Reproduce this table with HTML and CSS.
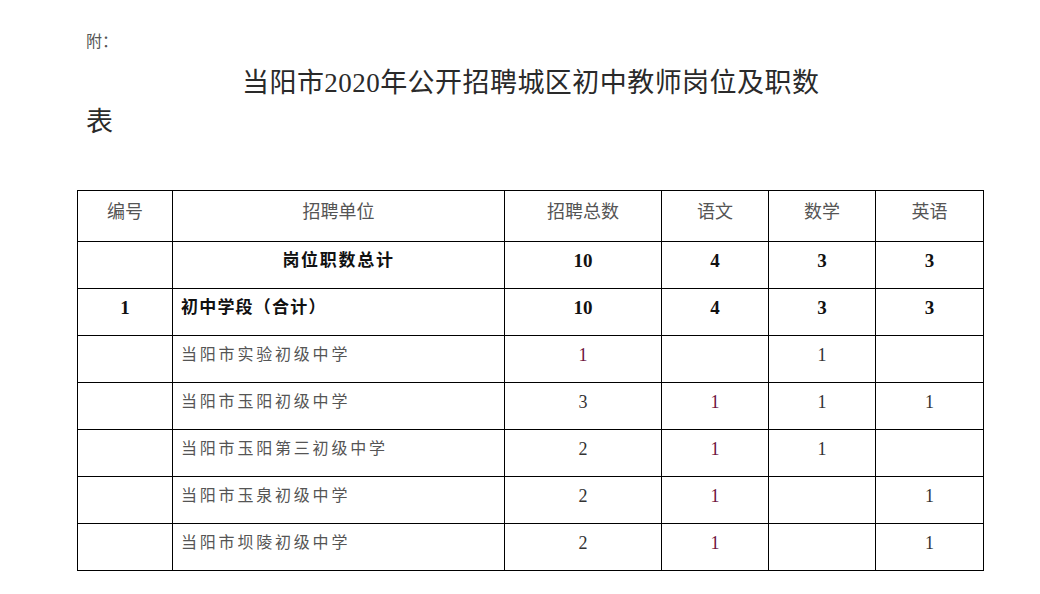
FILE: index.html
```html
<!DOCTYPE html>
<html lang="zh-CN">
<head>
<meta charset="utf-8">
<title>当阳市2020年公开招聘城区初中教师岗位及职数表</title>
<link rel="stylesheet" href="styles.css">
</head>
<body>
<div class="page">
  <p class="note">附：</p>
  <h1 class="title">当阳市2020年公开招聘城区初中教师岗位及职数表</h1>
  <table class="jobs">
    <colgroup>
      <col class="c-no"><col class="c-unit"><col class="c-total"><col class="c-sub"><col class="c-sub"><col class="c-sub2">
    </colgroup>
    <tr class="head">
      <td>编号</td><td>招聘单位</td><td>招聘总数</td><td>语文</td><td>数学</td><td>英语</td>
    </tr>
    <tr class="sum">
      <td></td><td class="unit-c">岗位职数总计</td><td>10</td><td>4</td><td>3</td><td>3</td>
    </tr>
    <tr class="sum">
      <td>1</td><td class="unit-l">初中学段（合计）</td><td>10</td><td>4</td><td>3</td><td>3</td>
    </tr>
    <tr class="item">
      <td></td><td class="unit-l">当阳市实验初级中学</td><td class="hl">1</td><td></td><td>1</td><td></td>
    </tr>
    <tr class="item">
      <td></td><td class="unit-l">当阳市玉阳初级中学</td><td>3</td><td class="hl">1</td><td>1</td><td>1</td>
    </tr>
    <tr class="item">
      <td></td><td class="unit-l">当阳市玉阳第三初级中学</td><td>2</td><td class="hl">1</td><td>1</td><td></td>
    </tr>
    <tr class="item">
      <td></td><td class="unit-l">当阳市玉泉初级中学</td><td>2</td><td class="hl">1</td><td></td><td>1</td>
    </tr>
    <tr class="item">
      <td></td><td class="unit-l">当阳市坝陵初级中学</td><td>2</td><td class="hl">1</td><td></td><td>1</td>
    </tr>
  </table>
</div>
</body>
</html>
```
FILE: styles.css
```css
html, body {
  margin: 0;
  padding: 0;
  background: #fff;
}
body {
  font-family: "Liberation Serif", "Noto Sans CJK SC", serif;
  color: #222;
}
.page {
  width: 1040px;
  height: 594px;
  overflow: hidden;
}
.note {
  margin: 0;
  padding: 32px 0 0 86px;
  font-size: 16px;
  line-height: 20px;
  color: #555;
}
.title {
  margin: 12px 0 0 86px;
  width: 750px;
  text-indent: 156px;
  font-size: 27px;
  line-height: 39px;
  letter-spacing: 0.45px;
  font-weight: 400;
  color: #2a2a2a;
}
.jobs {
  margin: 48px 0 0 77px;
  border-collapse: collapse;
  table-layout: fixed;
  width: 907px;
}
.c-no { width: 95px; }
.c-unit { width: 332px; }
.c-total { width: 157px; }
.c-sub { width: 107px; }
.c-sub2 { width: 108px; }
.jobs td {
  border: 1px solid #000;
  padding: 7px 0 0 0;
  vertical-align: top;
  text-align: center;
  font-size: 19px;
  line-height: 24px;
  height: 39px;
  box-sizing: border-box;
}
.jobs tr.head td {
  height: 51px;
  padding-top: 9px;
  font-size: 18px;
  color: #555;
}
.jobs tr.sum td {
  height: 47px;
  font-weight: 700;
  color: #111;
}
.jobs tr.item td {
  height: 47px;
  font-size: 18px;
  color: #333;
}
.jobs tr.sum td.unit-c {
  font-size: 17px;
  letter-spacing: 1.7px;
}
.jobs tr td.unit-l {
  text-align: left;
  padding-left: 8px;
}
.jobs tr.item td.unit-l {
  font-size: 16px;
  letter-spacing: 2.8px;
  color: #555;
}
.jobs tr.sum td.unit-l {
  font-size: 17px;
  letter-spacing: 1.2px;
}
.jobs tr td.hl {
  color: #6e1540;
}
```
